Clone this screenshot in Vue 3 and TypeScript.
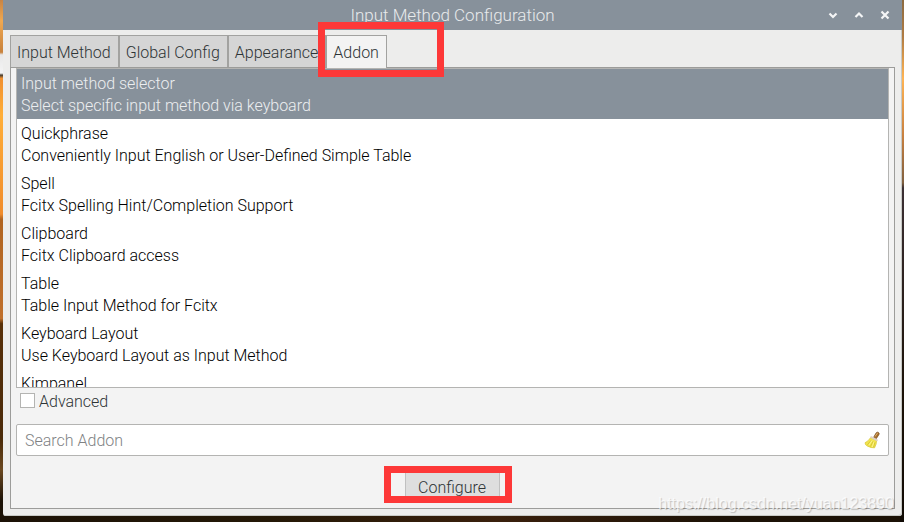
<script setup lang="ts">
import { ref } from 'vue'

interface Addon {
  name: string
  description: string
}

const tabs: string[] = ['Input Method', 'Global Config', 'Appearance', 'Addon']
const activeTab = ref('Addon')

const addons: Addon[] = [
  { name: 'Input method selector', description: 'Select specific input method via keyboard' },
  { name: 'Quickphrase', description: 'Conveniently Input English or User-Defined Simple Table' },
  { name: 'Spell', description: 'Fcitx Spelling Hint/Completion Support' },
  { name: 'Clipboard', description: 'Fcitx Clipboard access' },
  { name: 'Table', description: 'Table Input Method for Fcitx' },
  { name: 'Keyboard Layout', description: 'Use Keyboard Layout as Input Method' },
  { name: 'Kimpanel', description: '' },
]
const selected = ref(0)
const advanced = ref(false)
const query = ref('')
</script>

<template>
  <div class="desktop">
    <main class="window">
      <header class="titlebar">
        <h1 class="title">Input Method Configuration</h1>
        <div class="controls">
          <button type="button" aria-label="Minimize">
            <svg viewBox="0 0 10 10" width="10" height="10"><path d="M1.5 3.5 5 7l3.5-3.5" /></svg>
          </button>
          <button type="button" aria-label="Maximize">
            <svg viewBox="0 0 10 10" width="10" height="10"><path d="M1.5 7 5 3.5 8.5 7" /></svg>
          </button>
          <button type="button" aria-label="Close">
            <svg viewBox="0 0 10 10" width="10" height="10"><path d="m1.5 1.5 7 7m0-7-7 7" /></svg>
          </button>
        </div>
      </header>

      <div class="notebook">
        <div class="tabs" role="tablist">
          <button
            v-for="tab in tabs"
            :key="tab"
            type="button"
            role="tab"
            class="tab"
            :class="{ active: tab === activeTab }"
            :aria-selected="tab === activeTab"
            @click="activeTab = tab"
          >
            {{ tab }}
            <span v-if="tab === 'Addon'" class="mark mark-tab"></span>
          </button>
        </div>

        <section class="page">
          <ul class="list">
            <li
              v-for="(addon, i) in addons"
              :key="addon.name"
              class="row"
              :class="{ selected: i === selected }"
              @click="selected = i"
            >
              <div>{{ addon.name }}</div>
              <div>{{ addon.description }}</div>
            </li>
          </ul>

          <label class="advanced">
            <input v-model="advanced" type="checkbox" />
            Advanced
          </label>

          <div class="search">
            <input v-model="query" type="text" placeholder="Search Addon" aria-label="Search Addon" />
            <button type="button" aria-label="Clear search" @click="query = ''">
              <svg viewBox="0 0 16 18" width="16" height="18">
                <path d="M9.5 6.5 12.2 1.8Q13.2.7 14.4 1.4T15 3.4L12.2 7.8Z" fill="#a8702c" stroke="#74481a" stroke-width=".7" />
                <path d="m11 5.5 2.6-3.6" stroke="#e0b070" stroke-width="1" />
                <path d="M6.8 6.4Q4.6 10 1 11.8 1 14 3.6 15.2 7 17 10.6 16.8 12.6 13 12.6 9.6Z" fill="#f2e44e" stroke="#d6c430" stroke-width=".7" />
                <path d="M7 9.4 3.4 13.8M9 10.4 6.4 15.6M11 11 9.6 16.2" stroke="#cdbb28" stroke-width=".7" fill="none" />
                <path d="M8 9.6 5 14M10 10.8 8.2 16" stroke="#fff8a0" stroke-width=".8" fill="none" />
                <path d="m7.2 6.2 5.6 3" stroke="#ddd0c4" stroke-width="2" stroke-linecap="round" />
              </svg>
            </button>
          </div>

          <div class="actions">
            <button type="button" class="configure">
              Configure
              <span class="mark mark-configure"></span>
            </button>
          </div>
        </section>
      </div>
    </main>
    <div class="watermark">https://blog.csdn.net/yuan123890</div>
  </div>
</template>

<style>
body {
  margin: 0;
}
</style>

<style scoped>
.desktop {
  position: relative;
  box-sizing: border-box;
  height: 100vh;
  min-height: 360px;
  padding: 0 2px 6px 3px;
  overflow: hidden;
  font: 300 16px/22px Roboto, "Liberation Sans", sans-serif;
  color: #2e3436;
  background:
    linear-gradient(#c88444 0, #f0a850 4%, #c8823c 10%, #e8e8e8 10.5%, #f4f4f4 14%, #443c30 14.4%, #f09030 15%, #ffae38 22%, #f08c2c 41%, #b06420 42%, #c0702c 61%, #583008 62%, #4a2a08 84%, #6a4820 90%, #1c1206 96%) left / 4px 100% no-repeat,
    linear-gradient(#8c6a40 0, #b07c44 7%, #ffb454 15%, #c88040 26%, #806040 35%, #3c3034 36%, #1c1208 75%, #100a04 100%) right / 4px 100% no-repeat,
    linear-gradient(90deg, #1c1206, #241806 30%, #3a200c 55%, #1c1206 80%);
}

button {
  font: inherit;
  color: inherit;
}

.window {
  display: flex;
  flex-direction: column;
  box-sizing: border-box;
  height: 100%;
  border-radius: 0 0 3px 3px;
  background: #ededec;
  box-shadow: inset -1px -1px #c8cac6;
}

.titlebar {
  display: grid;
  grid-template-columns: 1fr auto 1fr;
  align-items: center;
  height: 30px;
  flex: none;
  background: #87919b;
  color: #e8eaec;
}

.title {
  grid-column: 2;
  margin: 0;
  font: inherit;
  font-size: 17px;
}

.controls {
  display: flex;
  justify-content: flex-end;
  gap: 16px;
  padding-right: 12px;
}

.controls button {
  display: flex;
  padding: 0;
  border: 0;
  background: none;
}

.controls path {
  fill: none;
  stroke: #f4f5f6;
  stroke-width: 2.2;
}

.notebook {
  display: flex;
  flex: 1;
  flex-direction: column;
  min-height: 0;
  padding: 5px 7px 7px;
}

.tabs {
  display: flex;
  flex: none;
}

.tab {
  position: relative;
  height: 32px;
  padding: 2px 7px 0 6px;
  border: 1px solid #a2a2a0;
  border-bottom: 0;
  background: #d5d5d5;
  white-space: nowrap;
}

.tab.active {
  z-index: 1;
  height: 33px;
  margin-bottom: -1px;
  background: #f3f3f3;
}

.page {
  display: flex;
  flex: 1;
  flex-direction: column;
  min-height: 0;
  padding: 0 5px 5px;
  border: 1px solid #9c9c9a;
  background: #f3f3f3;
}

.list {
  flex: 1;
  min-height: 0;
  margin: 0;
  padding: 0;
  overflow: hidden;
  border: 1px solid #b4b4b2;
  background: #fff;
  color: #000;
  list-style: none;
}

.row {
  padding: 4px 4px 2px;
}

.row.selected {
  background: #87919b;
  color: #eceef0;
}

.advanced {
  display: flex;
  align-items: flex-start;
  align-self: flex-start;
  gap: 4px;
  margin-bottom: 11px;
  padding: 3px 0 0 4px;
}

.advanced input {
  box-sizing: border-box;
  width: 15px;
  height: 15px;
  margin: 2px 0 0;
  appearance: none;
  border: 1px solid #b4b4b2;
  background: #fff;
}

.advanced input:checked {
  background: #87919b;
}

.search {
  display: flex;
  align-items: center;
  box-sizing: border-box;
  height: 32px;
  flex: none;
  padding: 0 8px;
  border: 1px solid #b4b4b2;
  border-radius: 2px;
  background: #fff;
}

.search input {
  flex: 1;
  min-width: 0;
  height: 28px;
  padding: 0;
  border: 0;
  outline: 0;
  background: none;
  font: inherit;
  color: #2e3436;
}

.search input::placeholder {
  color: #808284;
  opacity: 1;
}

.search button {
  display: flex;
  padding: 0;
  border: 0;
  background: none;
}

.search path {
  stroke-linejoin: round;
}

.actions {
  display: flex;
  justify-content: center;
  flex: none;
  padding-top: 15px;
}

.configure {
  position: relative;
  height: 32px;
  padding: 2px 13px 0 12px;
  border: 1px solid #c0c0c0;
  background: #dedede;
}

.mark {
  position: absolute;
  border: 7px solid #fd3838;
  pointer-events: none;
}

.mark-tab {
  top: -14px;
  left: -9px;
  width: 112px;
  height: 41px;
}

.mark-configure {
  top: -6px;
  left: -22px;
  width: 114px;
  height: 23px;
}

.watermark {
  position: absolute;
  right: 10px;
  bottom: 7px;
  font: 16px/22px "Liberation Sans", sans-serif;
  color: rgba(255, 255, 255, 0.75);
  text-shadow: 1px 1px 1px rgba(0, 0, 0, 0.2);
  pointer-events: none;
}
</style>
